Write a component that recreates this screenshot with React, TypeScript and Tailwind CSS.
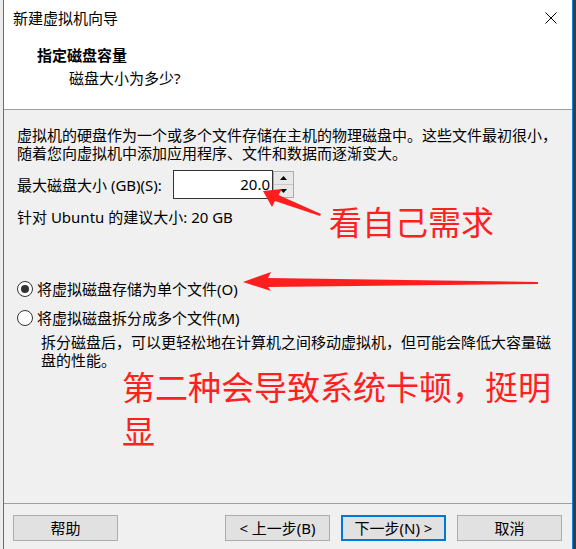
import React from "react";

const font = { fontFamily: '"Noto Sans", "Noto Sans CJK SC", sans-serif' };

const Radio = ({ checked, label }: { checked?: boolean; label: string }) => (
  <div className="flex items-center h-[20px] gap-[4px]">
    <span className="w-[16px] h-[16px] rounded-full border border-[#333] bg-white flex items-center justify-center">
      {checked && <span className="w-[8px] h-[8px] rounded-full bg-[#333]" />}
    </span>
    <span className="leading-[20px]">{label}</span>
  </div>
);

const Btn = ({ label, primary }: { label: string; primary?: boolean }) => (
  <button
    className={
      "w-[105px] h-[26px] bg-[#e1e1e1] text-[15px] leading-none text-black " +
      (primary ? "border-2 border-[#0078d7]" : "border border-[#adadad]")
    }
  >
    {label}
  </button>
);

export default function App() {
  return (
    <div className="w-[576px] h-[549px] flex bg-[#ececec] overflow-hidden text-[15px] text-black" style={font}>
      <div className="w-[3px] shrink-0" />
      <div className="relative w-[570px] shrink-0 flex flex-col border-l border-r border-[#1883d7] bg-[#f0f0f0]">
        {/* Header */}
        <div className="bg-white h-[110px] border-b border-[#a0a0a0] shrink-0">
          <div className="h-[36px] flex items-center justify-between pl-[9px] pr-[15px]">
            <span className="leading-[20px]">新建虚拟机向导</span>
            <svg width="12" height="12" viewBox="0 0 12 12">
              <path d="M0.5 0.5 L11.5 11.5 M11.5 0.5 L0.5 11.5" stroke="#000" strokeWidth="1" />
            </svg>
          </div>
          <div className="mt-[9px] pl-[33px] font-bold leading-[20px]">指定磁盘容量</div>
          <div className="mt-[3px] pl-[65px] leading-[20px]">磁盘大小为多少?</div>
        </div>

        {/* Body */}
        <div className="flex-1 pl-[13px] pr-[8px] pt-[16px]">
          <p className="leading-[18px] whitespace-nowrap">
            虚拟机的硬盘作为一个或多个文件存储在主机的物理磁盘中。这些文件最初很小，
            <br />
            随着您向虚拟机中添加应用程序、文件和数据而逐渐变大。
          </p>

          <div className="mt-[8px] flex items-center h-[29px]">
            <span className="w-[156px] leading-[18px]">最大磁盘大小 (GB)(S):</span>
            <div className="w-[100px] h-[29px] border border-[#333] bg-white flex items-center justify-end pr-[2px]">
              20.0
            </div>
            <div className="w-[21px] h-[27px] flex flex-col border border-[#acacac] bg-[#e8e8e8]">
              <div className="flex-1 flex items-center justify-center border-b border-[#c8c8c8]">
                <svg width="7" height="4" viewBox="0 0 7 4"><path d="M3.5 0 L7 4 L0 4 Z" fill="#000" /></svg>
              </div>
              <div className="flex-1 flex items-center justify-center">
                <svg width="7" height="4" viewBox="0 0 7 4"><path d="M0 0 L7 0 L3.5 4 Z" fill="#000" /></svg>
              </div>
            </div>
          </div>

          <p className="mt-[9px] leading-[18px]">针对 Ubuntu 的建议大小: 20 GB</p>

          <div className="mt-[53px]">
            <Radio checked label="将虚拟磁盘存储为单个文件(O)" />
          </div>
          <div className="mt-[9px]">
            <Radio label="将虚拟磁盘拆分成多个文件(M)" />
          </div>
          <p className="mt-[5px] pl-[24px] leading-[18px] whitespace-nowrap">
            拆分磁盘后，可以更轻松地在计算机之间移动虚拟机，但可能会降低大容量磁
            <br />
            盘的性能。
          </p>
          <p className="-mt-[3px] pl-[105px] text-[33px] leading-[44px] text-[#ff2020] whitespace-nowrap">
            第二种会导致系统卡顿，挺明
            <br />
            显
          </p>
        </div>

        {/* Footer */}
        <div className="h-[46px] shrink-0 border-t border-[#a0a0a0] flex items-start pt-[11px] pl-[9px] pr-[10px]">
          <Btn label="帮助" />
          <div className="flex-1" />
          <div className="flex gap-[11px]">
            <Btn label="< 上一步(B)" />
            <Btn label="下一步(N) >" primary />
            <Btn label="取消" />
          </div>
        </div>

        {/* Annotations */}
        <span className="absolute left-[325px] top-[201px] text-[33px] leading-[44px] text-[#ff2020] whitespace-nowrap">
          看自己需求
        </span>
        <svg className="absolute left-[-4px] top-0 pointer-events-none" width="576" height="549">
          <polygon points="263,191 282,189 278.5,195 321,214 320,216 275,201 272,207" fill="#ff1e1e" />
          <polygon points="243,282 271,272 268,278 538,282 538,284 268,287 271,291" fill="#ff1e1e" />
        </svg>
      </div>
      <div className="flex-1 bg-[#3c3c3c]" />
    </div>
  );
}
